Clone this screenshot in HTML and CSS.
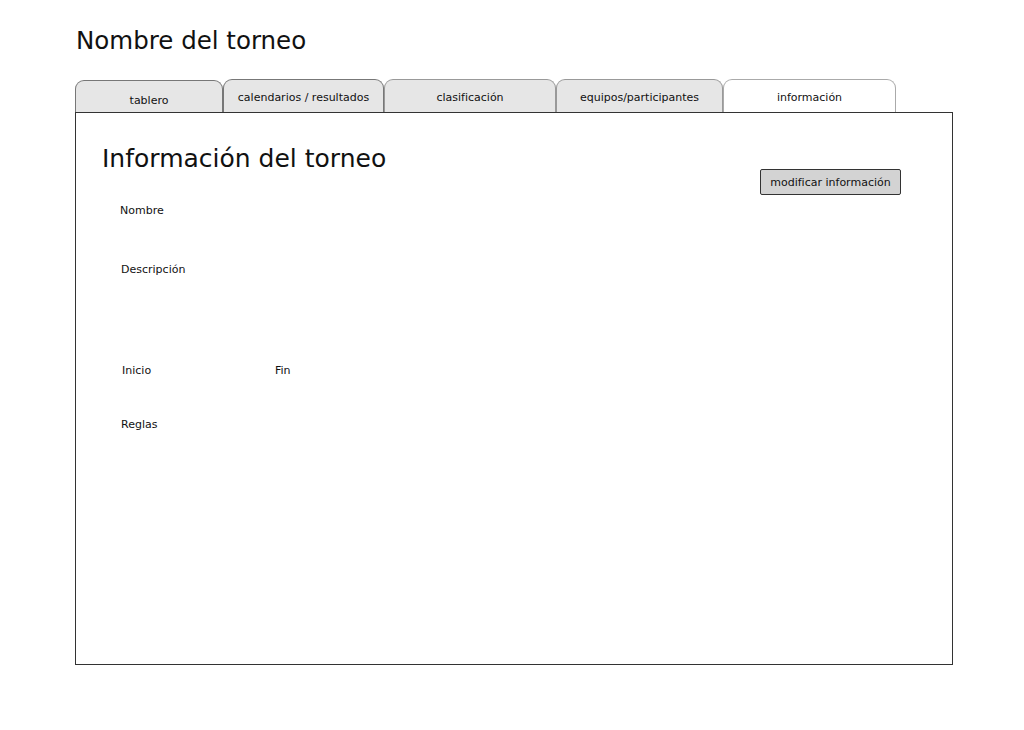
FILE: index.html
```html
<!DOCTYPE html>
<html lang="es">
<head>
    <meta charset="UTF-8">
    <meta name="viewport" content="width=device-width, initial-scale=1.0">
    <title>Nombre del torneo</title>
    <link rel="stylesheet" href="styles.css">
</head>
<body>

    <div class="page">
        <h1>Nombre del torneo</h1>

        <div class="tabs">
            <div class="tab tab-1">tablero</div>
            <div class="tab tab-2">calendarios / resultados</div>
            <div class="tab tab-3">clasificación</div>
            <div class="tab tab-4">equipos/participantes</div>
            <div class="tab tab-5 active">información</div>
        </div>

        <div class="panel">
            <div class="panel-head">
                <h2>Información del torneo</h2>
                <button class="edit-btn">modificar información</button>
            </div>

            <div class="field field-name">Nombre</div>
            <div class="field field-desc">Descripción</div>
            <div class="field-row">
                <div class="field field-start">Inicio</div>
                <div class="field field-end">Fin</div>
            </div>
            <div class="field field-rules">Reglas</div>
        </div>
    </div>

</body>
</html>
```

FILE: styles.css
```css
body {
    font-family: 'DejaVu Sans', sans-serif;
    margin: 0;
    padding: 0;
    background-color: #ffffff;
    color: #111;
}

.page {
    width: 878px;
    margin-left: 75px;
}

h1 {
    font-weight: normal;
    font-size: 24.5px;
    line-height: 30px;
    margin: 0;
    padding-top: 26px;
    padding-left: 1px;
}

.tabs {
    display: flex;
    margin-top: 23px;
    height: 33px;
    align-items: flex-end;
}

.tab {
    box-sizing: border-box;
    height: 33px;
    background-color: #e6e6e6;
    border: 1px solid #777;
    border-bottom: none;
    border-radius: 9px 9px 0 0;
    font-size: 11px;
    text-align: center;
    padding-top: 11px;
}

.tab-1 { width: 148px; height: 32px; padding-top: 13px; }
.tab-2 { width: 161px; }
.tab-3 { width: 172px; border-color: #999; }
.tab-4 { width: 167px; border-color: #999; }
.tab-5 { width: 173px; border-color: #aaa; }

.tab.active {
    background-color: #ffffff;
}

.panel {
    box-sizing: border-box;
    height: 553px;
    border: 1px solid #333;
    padding: 29px 51px 0 26px;
}

.panel-head {
    display: flex;
    justify-content: space-between;
    align-items: flex-start;
}

h2 {
    font-weight: normal;
    font-size: 25px;
    line-height: 34px;
    margin: 0;
}

.edit-btn {
    font-family: 'DejaVu Sans', sans-serif;
    font-size: 11px;
    color: #111;
    background-color: #d3d3d3;
    border: 1px solid #333;
    border-radius: 2px;
    width: 141px;
    height: 26px;
    padding: 0;
    margin-top: 27px;
}

.field {
    font-size: 11px;
    line-height: 16px;
    padding-left: 18px;
}

.field-name {
    margin-top: 8px;
}

.field-desc {
    margin-top: 43px;
    padding-left: 19px;
}

.field-row {
    display: flex;
    margin-top: 85px;
}

.field-start {
    width: 153px;
    padding-left: 20px;
}

.field-end {
    padding-left: 0;
}

.field-rules {
    margin-top: 38px;
    padding-left: 19px;
}
```
